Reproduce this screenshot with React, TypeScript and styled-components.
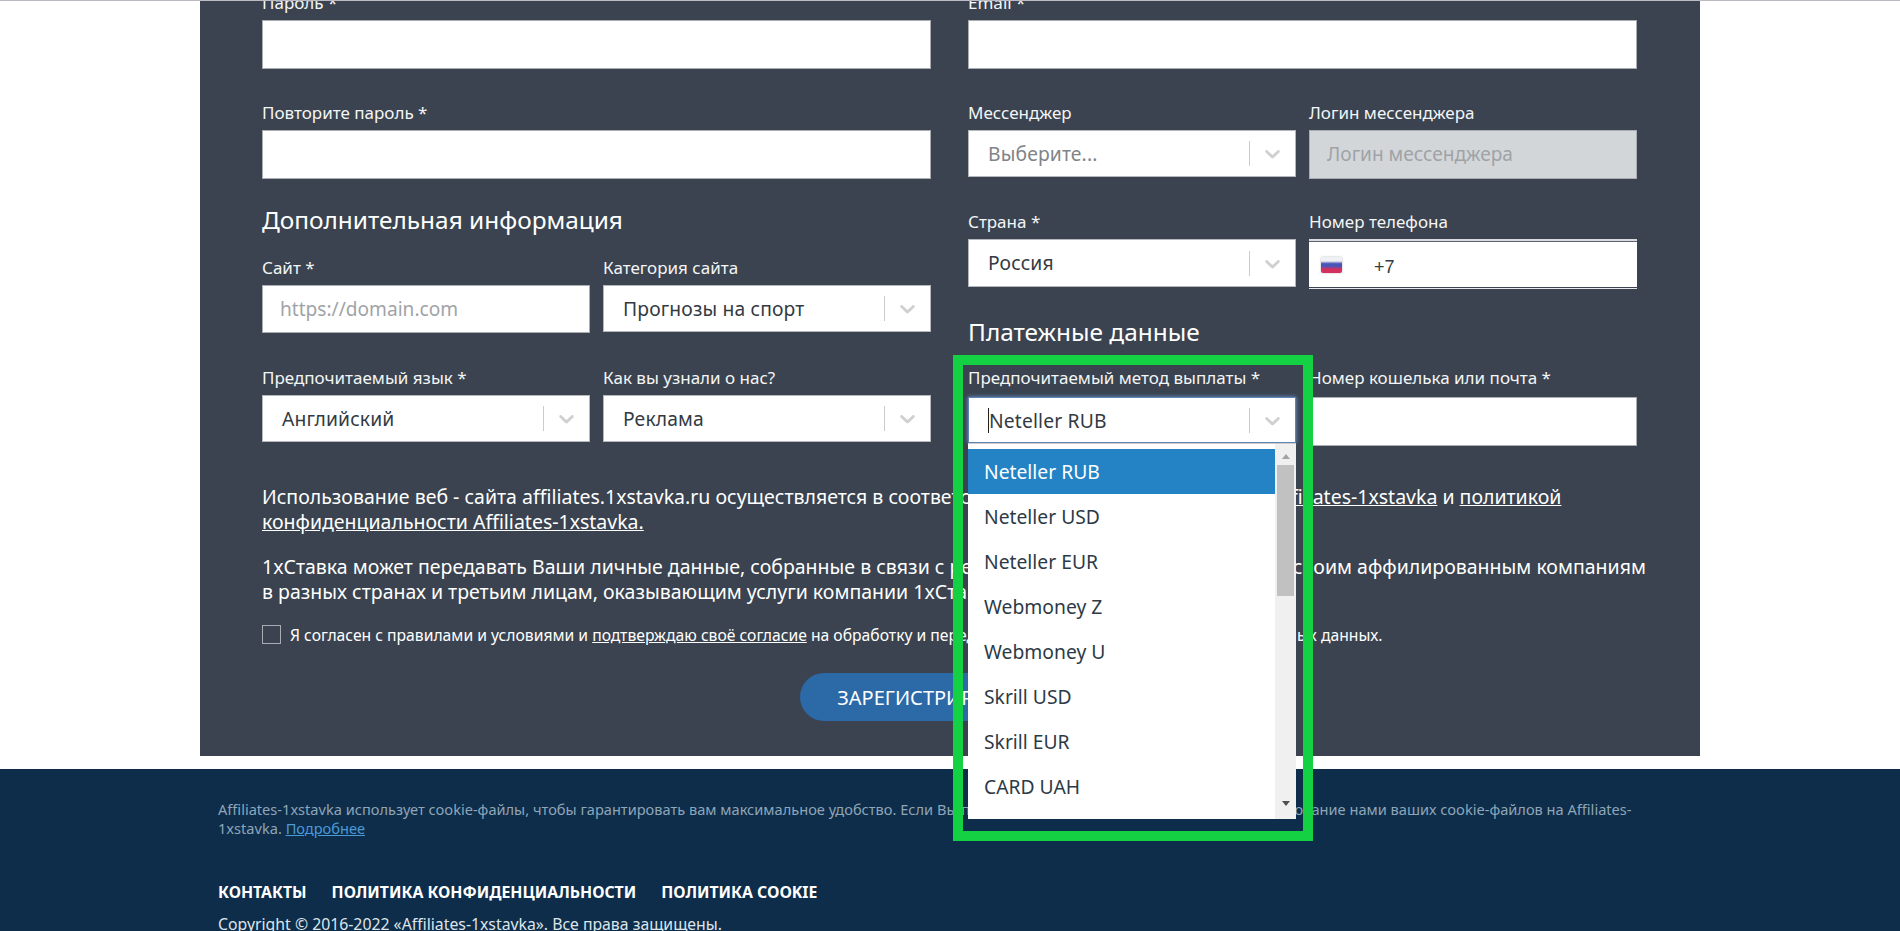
import React from "react";
import styled, { createGlobalStyle } from "styled-components";

const GlobalStyle = createGlobalStyle`
  html, body {
    margin: 0;
    padding: 0;
    background: #fff;
  }
  body {
    font-family: "Noto Sans", "Open Sans", sans-serif;
  }
  * {
    box-sizing: border-box;
  }
`;

const Page = styled.div`
  position: relative;
  width: 1900px;
  height: 931px;
  overflow: hidden;
  border-top: 1px solid #bcbac2;
  background: #fff;
`;

const Panel = styled.main`
  display: flow-root;
  width: 1500px;
  height: 755px;
  margin: 0 auto;
  padding: 0 63px 0 62px;
  background: #3a434f;
  color: #f4f5f6;
`;

const Columns = styled.div`
  display: grid;
  grid-template-columns: 669px 669px;
  column-gap: 37px;
  margin-top: -8px;
`;

const Column = styled.div`
  display: flex;
  flex-direction: column;
`;

const Pair = styled.div`
  display: grid;
  grid-template-columns: 1fr 1fr;
  column-gap: 13px;
  align-items: start;
`;

const Field = styled.div<{ $after?: number }>`
  margin-bottom: ${(p) => p.$after ?? 0}px;
`;

const Label = styled.label<{ $gap?: number }>`
  display: block;
  margin-bottom: ${(p) => p.$gap ?? 7}px;
  font-size: 17px;
  line-height: 20px;
  white-space: nowrap;
`;

const Heading = styled.h2<{ $top: number; $bottom: number }>`
  margin: ${(p) => p.$top}px 0 ${(p) => p.$bottom}px;
  font-size: 24.4px;
  font-weight: 400;
  line-height: 30px;
  color: #fff;
`;

const Input = styled.div<{ $h?: number; $disabled?: boolean }>`
  display: flex;
  align-items: center;
  height: ${(p) => p.$h ?? 49}px;
  padding: 0 17px 1px;
  background: ${(p) => (p.$disabled ? "#d2d6d9" : "#fff")};
  border: 1px solid #a9adb2;
  color: #9fa3a7;
  font-size: 19.1px;
`;

const SelectWrap = styled.div`
  position: relative;
`;

const SelectBox = styled.div<{ $h: number; $focus?: boolean }>`
  display: flex;
  align-items: center;
  height: ${(p) => p.$h}px;
  padding-left: 19px;
  background: #fff;
  border: 1px solid ${(p) => (p.$focus ? "#5f84b8" : "#b4b8bc")};
  box-shadow: ${(p) => (p.$focus ? "0 0 4px #6f9bd6" : "none")};
`;

const SelectValue = styled.span<{ $muted?: boolean; $caret?: boolean }>`
  flex: 1;
  padding-top: ${(p) => (p.$caret ? 1 : 0)}px;
  font-size: 19.3px;
  letter-spacing: 0.15px;
  color: ${(p) => (p.$muted ? "#808488" : "#333a42")};
  border-left: ${(p) => (p.$caret ? "1px solid #222" : "0")};
  line-height: 24px;
`;

const Divider = styled.span`
  width: 1px;
  height: 25px;
  background: #ccc;
`;

const ChevronBox = styled.span`
  display: flex;
  justify-content: center;
  width: 45px;
  color: #d0d0d0;
`;

const Chevron = () => (
  <svg width="25" height="25" viewBox="0 0 20 20" fill="currentColor">
    <path d="M4.516 7.548c0.436-0.446 1.043-0.481 1.576 0l3.908 3.747 3.908-3.747c0.533-0.481 1.141-0.446 1.574 0 0.436 0.445 0.408 1.197 0 1.615-0.406 0.418-4.695 4.502-4.695 4.502-0.217 0.223-0.502 0.335-0.787 0.335s-0.57-0.112-0.789-0.335c0 0-4.287-4.084-4.695-4.502s-0.436-1.17 0-1.615z" />
  </svg>
);

const Menu = styled.div`
  position: absolute;
  top: 100%;
  left: 0;
  right: 0;
  z-index: 5;
  display: flex;
  height: 376px;
  background: #fff;
  border-top: 1px solid #ccc;
`;

const MenuList = styled.ul`
  flex: 1;
  margin: 0;
  padding: 5px 0 0;
  list-style: none;
`;

const MenuItem = styled.li<{ $active?: boolean }>`
  height: 45px;
  padding-left: 16px;
  line-height: 45px;
  font-size: 19.3px;
  color: ${(p) => (p.$active ? "#fff" : "#2d3a46")};
  background: ${(p) => (p.$active ? "#2383c4" : "transparent")};
`;

const ScrollTrack = styled.div`
  display: flex;
  flex-direction: column;
  align-items: center;
  width: 21px;
  padding-top: 10px;
  background: #f0f0f0;
`;

const ArrowUp = styled.span`
  width: 0;
  height: 0;
  border-left: 4.5px solid transparent;
  border-right: 4.5px solid transparent;
  border-bottom: 5px solid #a3a3a3;
`;

const ArrowDown = styled.span`
  width: 0;
  height: 0;
  margin-top: 205px;
  border-left: 4.5px solid transparent;
  border-right: 4.5px solid transparent;
  border-top: 5px solid #505050;
`;

const ScrollThumb = styled.span`
  width: 17px;
  height: 131px;
  margin-top: 6px;
  background: #c1c1c1;
`;

const PhoneBox = styled.div`
  display: flex;
  align-items: center;
  height: 50px;
  padding: 4px 0 0 12px;
  background: #fff;
  border-top: 2px solid #d8dadc;
  border-bottom: 1px solid #e6e7e8;
  box-shadow: inset 0 1px 0 #5b6470, inset 0 -1px 0 #3a434f;
`;

const Flag = styled.span`
  width: 21px;
  height: 16px;
  margin: -4px 32px 0 0;
  border-radius: 2px;
  box-shadow: 0 0 2px rgba(0, 0, 0, 0.35);
  background: linear-gradient(#f0f1f5 0 25%, #4a55b8 42% 58%, #d4305f 75% 100%);
`;

const PhoneValue = styled.span`
  margin-top: 2px;
  font-family: "Liberation Sans", Arial, sans-serif;
  font-size: 18px;
  color: #333a42;
`;

const Legal = styled.div`
  margin-top: 38px;
  font-size: 19.5px;
  line-height: 25px;
  color: #fff;
`;

const Paragraph = styled.p`
  margin: 0 0 20px;
  white-space: nowrap;
`;

const TextLink = styled.a`
  color: inherit;
  text-decoration: underline;
`;

const Agree = styled.div`
  display: flex;
  align-items: center;
  margin-top: 19px;
  font-size: 15.7px;
  line-height: 19px;
  color: #fff;
  white-space: nowrap;
`;

const AgreeText = styled.span`
  padding-top: 2px;
`;

const CheckBox = styled.span`
  width: 19px;
  height: 19px;
  margin-right: 9px;
  border: 1px solid #a9adb2;
`;

const ButtonRow = styled.div`
  display: flex;
  justify-content: center;
  margin-top: 28px;
`;

const SubmitButton = styled.button`
  width: 300px;
  height: 48px;
  border: 0;
  border-radius: 24px;
  background: #2b69a7;
  color: #fff;
  font: inherit;
  font-size: 20px;
  text-transform: uppercase;
`;

const Footer = styled.footer`
  height: 162px;
  margin-top: 13px;
  padding: 31px 218px 0;
  background: #0d2d4a;
  color: #8fa5b8;
`;

const CookieText = styled.p`
  margin: 0;
  width: 1440px;
  font-size: 14.6px;
  line-height: 19px;
  white-space: nowrap;
`;

const MoreLink = styled.a`
  color: #4b9ad6;
  text-decoration: underline;
`;

const FooterNav = styled.nav`
  display: flex;
  gap: 25px;
  margin-top: 44px;
`;

const FooterLink = styled.a`
  font-size: 15.8px;
  font-weight: 700;
  line-height: 20px;
  text-transform: uppercase;
  color: #fff;
`;

const Copyright = styled.p`
  margin: 12px 0 0;
  font-size: 15.8px;
  line-height: 20px;
  color: #dfe5ea;
`;

const Callout = styled.div`
  position: absolute;
  left: 953px;
  top: 354px;
  width: 360px;
  height: 486px;
  border: 10px solid #14d144;
  pointer-events: none;
  z-index: 10;
`;

interface SelectProps {
  value: string;
  h: number;
  muted?: boolean;
  focus?: boolean;
  children?: React.ReactNode;
}

function Select({ value, h, muted, focus, children }: SelectProps): JSX.Element {
  return (
    <SelectWrap>
      <SelectBox $h={h} $focus={focus}>
        <SelectValue $muted={muted} $caret={focus}>
          {value}
        </SelectValue>
        <Divider />
        <ChevronBox>
          <Chevron />
        </ChevronBox>
      </SelectBox>
      {children}
    </SelectWrap>
  );
}

const payoutMethods = [
  "Neteller RUB",
  "Neteller USD",
  "Neteller EUR",
  "Webmoney Z",
  "Webmoney U",
  "Skrill USD",
  "Skrill EUR",
  "CARD UAH",
];

export default function App(): JSX.Element {
  return (
    <Page>
      <GlobalStyle />
      <Panel>
        <Columns>
          <Column>
            <Field $after={34}>
              <Label>Пароль *</Label>
              <Input />
            </Field>
            <Field>
              <Label>Повторите пароль *</Label>
              <Input />
            </Field>
            <Heading $top={26} $bottom={23}>
              Дополнительная информация
            </Heading>
            <Pair>
              <Field $after={35}>
                <Label>Сайт *</Label>
                <Input $h={48}>https://domain.com</Input>
              </Field>
              <Field>
                <Label>Категория сайта</Label>
                <Select value="Прогнозы на спорт" h={47} />
              </Field>
            </Pair>
            <Pair>
              <Field>
                <Label>Предпочитаемый язык *</Label>
                <Select value="Английский" h={47} />
              </Field>
              <Field>
                <Label>Как вы узнали о нас?</Label>
                <Select value="Реклама" h={47} />
              </Field>
            </Pair>
          </Column>
          <Column>
            <Field $after={34}>
              <Label>Email *</Label>
              <Input />
            </Field>
            <Pair>
              <Field $after={33}>
                <Label>Мессенджер</Label>
                <Select value="Выберите..." h={47} muted />
              </Field>
              <Field $after={33}>
                <Label>Логин мессенджера</Label>
                <Input $disabled>Логин мессенджера</Input>
              </Field>
            </Pair>
            <Pair>
              <Field>
                <Label>Страна *</Label>
                <Select value="Россия" h={48} />
              </Field>
              <Field>
                <Label>Номер телефона</Label>
                <PhoneBox>
                  <Flag />
                  <PhoneValue>+7</PhoneValue>
                </PhoneBox>
              </Field>
            </Pair>
            <Heading $top={28} $bottom={21}>
              Платежные данные
            </Heading>
            <Pair>
              <Field>
                <Label $gap={9}>Предпочитаемый метод выплаты *</Label>
                <Select value="Neteller RUB" h={46} focus>
                  <Menu>
                    <MenuList>
                      {payoutMethods.map((method, index) => (
                        <MenuItem key={method} $active={index === 0}>
                          {method}
                        </MenuItem>
                      ))}
                    </MenuList>
                    <ScrollTrack>
                      <ArrowUp />
                      <ScrollThumb />
                      <ArrowDown />
                    </ScrollTrack>
                  </Menu>
                </Select>
              </Field>
              <Field>
                <Label $gap={9}>Номер кошелька или почта *</Label>
                <Input />
              </Field>
            </Pair>
          </Column>
        </Columns>
        <Legal>
          <Paragraph>
            Использование веб - сайта affiliates.1xstavka.ru осуществляется в соответствии с{" "}
            <TextLink>правилами и условиями Affiliates-1xstavka</TextLink> и{" "}
            <TextLink>политикой</TextLink>
            <br />
            <TextLink>конфиденциальности Affiliates-1xstavka.</TextLink>
          </Paragraph>
          <Paragraph>
            1xСтавка может передавать Ваши личные данные, собранные в связи с регистрацией и посещением сайта, своим аффилированным компаниям
            <br />
            в разных странах и третьим лицам, оказывающим услуги компании 1xСтавка.
          </Paragraph>
        </Legal>
        <Agree>
          <CheckBox />
          <AgreeText>
            Я согласен с правилами и условиями и{" "}
            <TextLink>подтверждаю своё согласие</TextLink> на обработку и передачу третьим лицам всех моих персональных данных.
          </AgreeText>
        </Agree>
        <ButtonRow>
          <SubmitButton type="button">Зарегистрироваться</SubmitButton>
        </ButtonRow>
      </Panel>
      <Footer>
        <CookieText>
          Affiliates-1xstavka использует cookie-файлы, чтобы гарантировать вам максимальное удобство. Если Вы продолжите обзор, вы подтверждаете использование нами ваших cookie-файлов на Affiliates-
          <br />
          1xstavka. <MoreLink>Подробнее</MoreLink>
        </CookieText>
        <FooterNav>
          <FooterLink>Контакты</FooterLink>
          <FooterLink>Политика конфиденциальности</FooterLink>
          <FooterLink>Политика cookie</FooterLink>
        </FooterNav>
        <Copyright>Copyright © 2016-2022 «Affiliates-1xstavka». Все права защищены.</Copyright>
      </Footer>
      <Callout />
    </Page>
  );
}
